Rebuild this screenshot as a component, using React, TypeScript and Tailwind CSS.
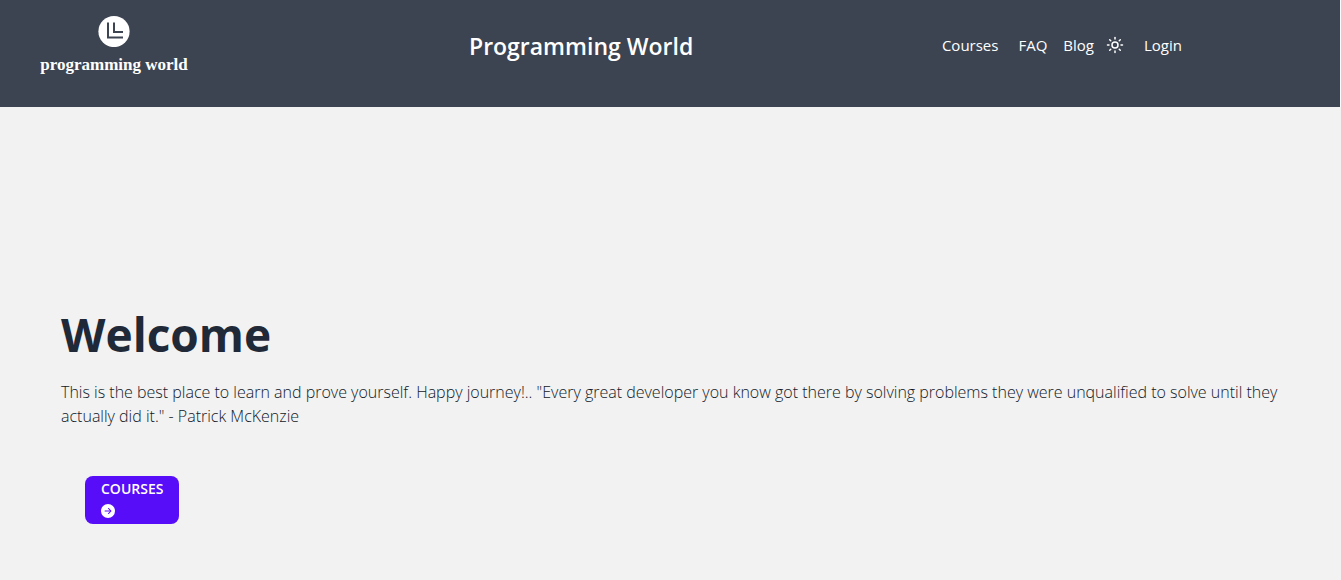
import { BsArrowRightCircleFill } from "react-icons/bs";
import { Sun } from "lucide-react";

function Logo() {
  return (
    <a href="#home" className="flex w-[152px] flex-col items-center gap-1">
      <svg viewBox="0 0 32 32" className="size-8" aria-hidden="true">
        <circle cx="16" cy="16.5" r="15.6" fill="#ffffff" />
        <path d="M10 7.5V22.5H25" fill="none" stroke="#3d4451" strokeWidth="2" />
        <path d="M16 7.5V17H25" fill="none" stroke="#3d4451" strokeWidth="2" />
      </svg>
      <span className="font-['Liberation_Serif',serif] text-[17px] leading-7 font-bold whitespace-nowrap">
        programming world
      </span>
    </a>
  );
}

function Header() {
  return (
    <header className="flex h-[107px] items-start border-r border-gray-50 bg-[#3d4451] text-white">
      <div className="w-[35%] pt-[15px] pl-[38px]">
        <Logo />
      </div>
      <a href="#home" className="mt-[30px] text-[23px] leading-8 font-semibold whitespace-nowrap">
        Programming World
      </a>
      <nav className="mt-[33px] mr-[158px] ml-auto flex items-center text-[15px] leading-6">
        <a href="#courses" className="mr-5">Courses</a>
        <a href="#faq" className="mr-4">FAQ</a>
        <a href="#blog" className="mr-3">Blog</a>
        <button type="button" aria-label="Toggle theme" className="mr-5">
          <Sun className="size-[18px]" />
        </button>
        <a href="#login">Login</a>
      </nav>
    </header>
  );
}

export default function App() {
  return (
    <div className="min-h-screen bg-[#f2f2f2] font-['Open_Sans',sans-serif] text-[#1f2937]">
      <Header />
      <main className="px-[61px] pt-[203px]">
        <h1 className="text-[46px] leading-12 font-bold">Welcome</h1>
        <p className="mt-[22px] text-base leading-6 font-light text-gray-900">
          This is the best place to learn and prove yourself. Happy journey!.. "Every great developer
          you know got there by solving problems they were unqualified to solve until they actually
          did it." - Patrick McKenzie
        </p>
        <button
          type="button"
          className="mt-12 ml-6 flex h-12 w-[94px] flex-col items-start rounded-lg bg-[#570df8] px-4 pt-1 text-sm leading-[18px] font-semibold text-white"
        >
          COURSES
          <BsArrowRightCircleFill className="mt-1.5 size-3.5" />
        </button>
      </main>
    </div>
  );
}
